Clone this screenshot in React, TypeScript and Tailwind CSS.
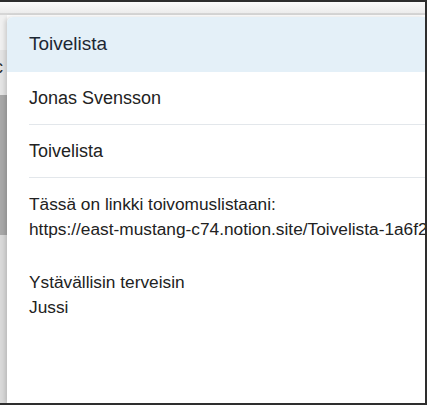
import React from 'react';

const font = { fontFamily: '"Liberation Sans", Arial, sans-serif' };

export default function App() {
  return (
    <div
      className="w-[427px] h-[405px] bg-[#2e2e2e] pt-[2px] pr-[2px] pb-[2px] overflow-hidden"
      style={font}
    >
      <div className="relative w-full h-full bg-white overflow-hidden">
        {/* page behind the dialog */}
        <div className="h-[13px] bg-gradient-to-b from-[#fbfbfb] to-[#ececec] border-b-2 border-[#d6d6d6]" />
        <div className="flex flex-col w-[7px] h-full">
          <div className="h-[35px] bg-[#f0f0f0]" />
          <div className="h-[45px] bg-[#e4e4e4] relative overflow-hidden">
            <span className="absolute left-[-6px] top-[4px] text-[18px] text-[#333]">c</span>
          </div>
          <div className="h-[140px] bg-[#a8a8a8]" />
          <div className="flex-1 bg-[#d9d9d9]" />
        </div>

        {/* dialog */}
        <div className="absolute left-[7px] top-[15px] right-0 bottom-0 bg-white rounded-tl-[6px] shadow-[-2px_0_4px_rgba(0,0,0,0.15)] overflow-hidden text-[#222]">
          <div className="h-[55px] bg-[#e4f0f8] flex items-center pl-[22px] text-[19px] text-[#1c2733]">
            Toivelista
          </div>
          <div className="pl-[22px]">
            <div className="h-[53px] flex items-center text-[18px] border-b border-[#e3e7eb]">
              Jonas Svensson
            </div>
            <div className="h-[53px] flex items-center text-[18px] border-b border-[#e3e7eb]">
              Toivelista
            </div>
            <div className="pt-[14px] text-[17.3px] leading-[25px] whitespace-nowrap">
              <div>Tässä on linkki toivomuslistaani:</div>
              <div>https://east-mustang-c74.notion.site/Toivelista-1a6f2</div>
              <div className="h-[28px]" />
              <div>Ystävällisin terveisin</div>
              <div>Jussi</div>
            </div>
          </div>
        </div>
      </div>
    </div>
  );
}
